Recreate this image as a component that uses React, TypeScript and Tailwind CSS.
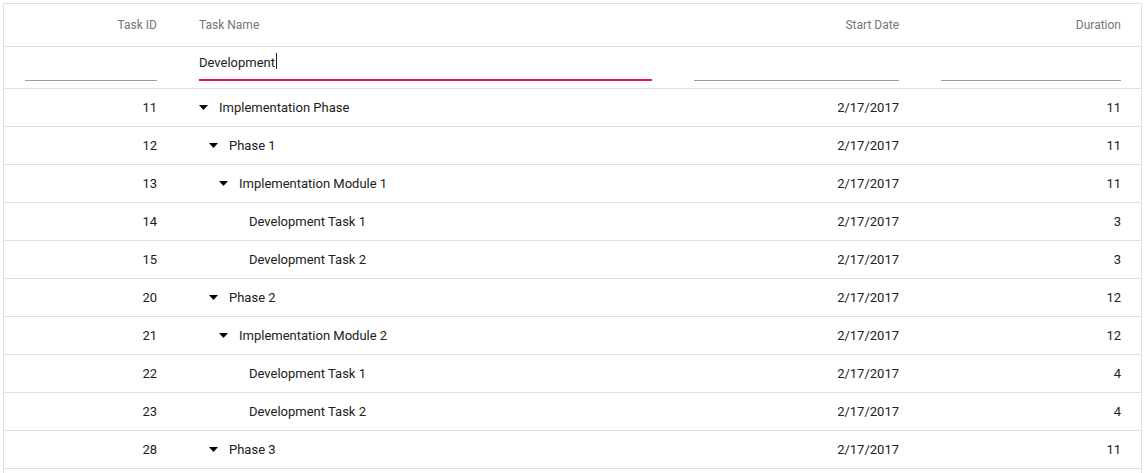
import React from 'react';

type Row = { id: number; name: string; level: number; parent: boolean; start: string; duration: number };

const rows: Row[] = [
  { id: 11, name: 'Implementation Phase', level: 0, parent: true, start: '2/17/2017', duration: 11 },
  { id: 12, name: 'Phase 1', level: 1, parent: true, start: '2/17/2017', duration: 11 },
  { id: 13, name: 'Implementation Module 1', level: 2, parent: true, start: '2/17/2017', duration: 11 },
  { id: 14, name: 'Development Task 1', level: 3, parent: false, start: '2/17/2017', duration: 3 },
  { id: 15, name: 'Development Task 2', level: 3, parent: false, start: '2/17/2017', duration: 3 },
  { id: 20, name: 'Phase 2', level: 1, parent: true, start: '2/17/2017', duration: 12 },
  { id: 21, name: 'Implementation Module 2', level: 2, parent: true, start: '2/17/2017', duration: 12 },
  { id: 22, name: 'Development Task 1', level: 3, parent: false, start: '2/17/2017', duration: 4 },
  { id: 23, name: 'Development Task 2', level: 3, parent: false, start: '2/17/2017', duration: 4 },
  { id: 28, name: 'Phase 3', level: 1, parent: true, start: '2/17/2017', duration: 11 },
];

const indent = ['pl-[21px]', 'pl-[31px]', 'pl-[41px]', 'pl-[51px]'];

// expand/collapse arrow
const Caret: React.FC = () => (
  <svg width="9" height="5" viewBox="0 0 9 5" className="mr-[11px] shrink-0">
    <path d="M0 0 H9 L4.5 5 Z" fill="#000" />
  </svg>
);

const cols = 'grid grid-cols-[174px_495px_247px_221px]';

const App: React.FC = () => {
  return (
    <div className="bg-white w-[1147px] h-[473px] overflow-hidden pt-[3px] pl-[3px] font-['Roboto',sans-serif]">
      <div className="w-[1139px] border border-[#e0e0e0]">
        <div className={`${cols} h-[43px] border-b border-[#e0e0e0] text-[12px] text-[#757575]`}>
          <div className="flex items-center justify-end pr-[21px]">Task ID</div>
          <div className="flex items-center pl-[21px]">Task Name</div>
          <div className="flex items-center justify-end pr-[21px]">Start Date</div>
          <div className="flex items-center justify-end pr-[20px]">Duration</div>
        </div>
        <div className={`${cols} h-[42px] border-b border-[#e0e0e0] text-[13px] text-[#212121]`}>
          <div className="flex items-end pl-[21px] pr-[21px] pb-[7px]">
            <div className="w-full border-b border-[#9e9e9e]" />
          </div>
          <div className="flex items-end pl-[21px] pr-[21px] pb-[7px]">
            <div className="w-full border-b-2 border-[#e3165b] h-[28px] flex items-start">
              <span>Development</span>
              <span className="w-px h-[16px] bg-[#212121] ml-[1px]" />
            </div>
          </div>
          <div className="flex items-end pl-[21px] pr-[21px] pb-[7px]">
            <div className="w-full border-b border-[#9e9e9e]" />
          </div>
          <div className="flex items-end pl-[21px] pr-[20px] pb-[7px]">
            <div className="w-full border-b border-[#9e9e9e]" />
          </div>
        </div>
        {rows.map((r) => (
          <div key={r.id} className={`${cols} h-[38px] border-b border-[#e0e0e0] text-[13px] text-[#212121]`}>
            <div className="flex items-center justify-end pr-[21px]">{r.id}</div>
            <div className={`flex items-center ${indent[r.level]}`}>
              {r.parent ? <Caret /> : <span className="w-[20px] shrink-0" />}
              <span>{r.name}</span>
            </div>
            <div className="flex items-center justify-end pr-[21px]">{r.start}</div>
            <div className="flex items-center justify-end pr-[20px]">{r.duration}</div>
          </div>
        ))}
        <div className="h-[20px]" />
      </div>
    </div>
  );
};

export default App;
